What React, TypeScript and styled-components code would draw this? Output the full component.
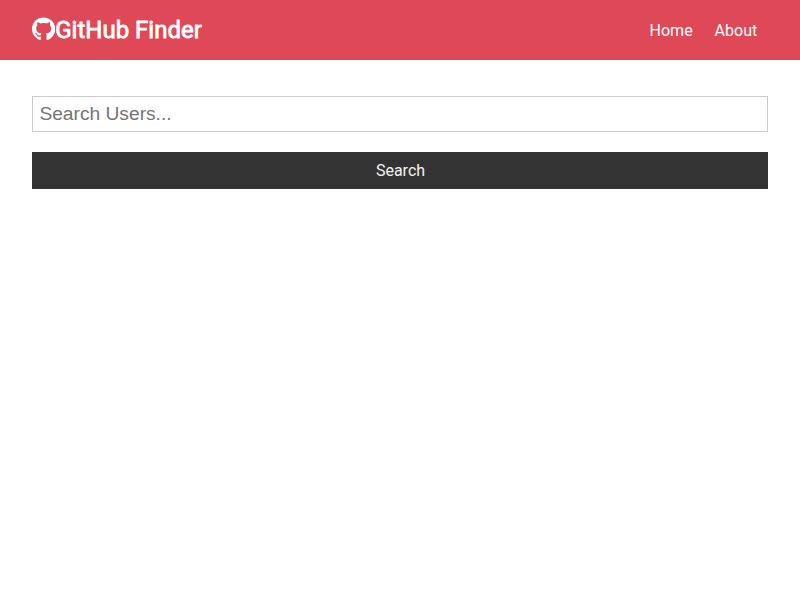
import React from "react";
import styled, { createGlobalStyle } from "styled-components";
import { FaGithub } from "react-icons/fa";

const GlobalStyle = createGlobalStyle`
  * { box-sizing: border-box; margin: 0; padding: 0; }
  body {
    font-family: Roboto, sans-serif;
    font-size: 16px;
    line-height: 1.6;
    background: #fff;
    color: #333;
  }
`;

const Navbar = styled.nav`
  display: flex;
  align-items: center;
  justify-content: space-between;
  height: 60px;
  padding: 0 32px;
  background: #df4957;
  color: #fff;
`;

const Brand = styled.h1`
  font-size: 24px;
  font-weight: 400;
  line-height: 1.2;
  -webkit-text-stroke: 0.8px #fff;
`;

const BrandIcon = styled(FaGithub)`
  width: 23.25px;
  height: 24px;
  vertical-align: -3px;
`;

const NavList = styled.ul`
  display: flex;
  padding-top: 2px;
  list-style: none;
`;

const NavLink = styled.a`
  display: block;
  padding: 7.2px;
  margin: 0 3.6px 0 4px;
  color: #fff;
  text-decoration: none;
`;

const Container = styled.main`
  padding: 0 32px;
`;

const SearchForm = styled.form`
  display: flex;
  flex-direction: column;
  gap: 20px;
  padding-top: 36px;
`;

const SearchInput = styled.input`
  width: 100%;
  height: 36px;
  padding: 6.4px;
  border: 1px solid #ccc;
  font-family: "Liberation Sans", Arial, sans-serif;
  font-size: 19.2px;
`;

const SearchButton = styled.button`
  width: 100%;
  height: 37px;
  padding-left: 1px;
  border: none;
  background: #333;
  color: #f4f4f4;
  font-family: inherit;
  font-size: 16px;
`;

export default function App() {
  return (
    <>
      <GlobalStyle />
      <Navbar>
        <Brand><BrandIcon strokeWidth="0" />GitHub Finder</Brand>
        <NavList>
          <li><NavLink href="#">Home</NavLink></li>
          <li><NavLink href="#">About</NavLink></li>
        </NavList>
      </Navbar>
      <Container>
        <SearchForm>
          <SearchInput type="text" placeholder="Search Users..." />
          <SearchButton type="button">Search</SearchButton>
        </SearchForm>
      </Container>
    </>
  );
}
